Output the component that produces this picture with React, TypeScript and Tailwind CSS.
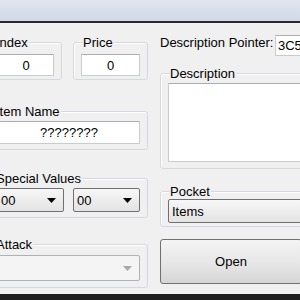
import React from "react";

type GroupProps = {
  label: string;
  className: string;
  children?: React.ReactNode;
};

function Group({ label, className, children }: GroupProps) {
  return (
    <div
      className={`relative border border-[#d5d9dd] rounded-[3px] shadow-[inset_1px_1px_0_#ffffff] ${className}`}
    >
      <span className="absolute left-[9px] top-[-8px] leading-[15px] bg-[#f0f0f0] pr-[1px] whitespace-nowrap">
        {label}
      </span>
      {children}
    </div>
  );
}

function TextBox({ value, className }: { value: string; className: string }) {
  return (
    <div
      className={`bg-white border border-[#c8cbcf] border-t-[#abadb3] flex items-center justify-center leading-[15px] ${className}`}
    >
      {value}
    </div>
  );
}

function Arrow({ color }: { color: string }) {
  return (
    <svg width="9" height="5" viewBox="0 0 9 5" className="shrink-0">
      <path d="M0 0 H9 L4.5 5 Z" fill={color} />
    </svg>
  );
}

function Combo({ value, className }: { value: string; className: string }) {
  return (
    <div
      className={`flex items-center justify-between border border-[#707070] rounded-[2px] bg-gradient-to-b from-[#f7f7f7] to-[#e3e3e3] pl-[3px] pr-[7px] leading-[15px] ${className}`}
    >
      <span>{value}</span>
      <Arrow color="#000000" />
    </div>
  );
}

export default function App() {
  return (
    <div
      className="w-[300px] h-[300px] overflow-hidden flex flex-col text-[13px] text-black"
      style={{ fontFamily: '"Liberation Sans", Arial, sans-serif' }}
    >
      <div className="h-[21px] shrink-0 bg-gradient-to-b from-[#dfe6ef] to-[#d0d9e5]" />
      <div className="h-[2px] shrink-0 bg-[#2a2a2a]" />

      <div className="h-[271px] shrink-0 bg-[#f0f0f0] flex overflow-hidden">
        {/* left column, partly cut at the window edge */}
        <div className="ml-[-14px] w-[162px] shrink-0 flex flex-col">
          <div className="mt-[19px] flex gap-[11px]">
            <Group label="Index" className="w-[76px] h-[38px] px-[7px] pt-[11px]">
              <TextBox value="0" className="h-[22px] pl-[4px]" />
            </Group>
            <Group label="Price" className="w-[75px] h-[38px] px-[7px] pt-[11px]">
              <TextBox value="0" className="h-[22px]" />
            </Group>
          </div>

          <Group label="Item Name" className="mt-[31px] h-[39px] px-[7px] pt-[9px]">
            <TextBox value="????????" className="h-[23px] pl-[4px]" />
          </Group>

          <Group label="Special Values" className="mt-[28px] h-[40px] px-[7px] pt-[9px]">
            <div className="flex gap-[9px]">
              <Combo value="00" className="flex-1 h-[24px] pl-[6px]" />
              <Combo value="00" className="flex-1 h-[24px]" />
            </div>
          </Group>

          <Group label="Attack" className="mt-[26px] h-[44px] px-[7px] pt-[10px]">
            <div className="h-[26px] flex items-center justify-end border border-[#adb2b5] rounded-[2px] bg-[#f4f4f4] pr-[7px]">
              <Arrow color="#a8a8a8" />
            </div>
          </Group>
        </div>

        {/* right column, runs past the right edge */}
        <div className="ml-[12px] w-[190px] shrink-0 flex flex-col">
          <div className="mt-[12px] flex items-start">
            <span className="w-[115px] shrink-0 leading-[15px] whitespace-nowrap">
              Description Pointer:
            </span>
            <div className="w-[60px] h-[21px] bg-white border border-[#c8cbcf] border-t-[#abadb3] pl-[2px] flex items-center leading-[15px]">
              3C5
            </div>
          </div>

          <Group label="Description" className="mt-[17px] h-[96px] px-[7px] pt-[9px]">
            <div className="h-[79px] bg-white border border-[#c8cbcf] border-t-[#abadb3]" />
          </Group>

          <Group label="Pocket" className="mt-[22px] h-[36px] px-[7px] pt-[7px]">
            <Combo value="Items" className="h-[24px]" />
          </Group>

          <button className="mt-[12px] w-[142px] h-[45px] shrink-0 border border-[#707070] rounded-[3px] bg-gradient-to-b from-[#f4f4f4] via-[#e8e8e8] to-[#d6d6d6] flex items-center justify-center leading-[15px]">
            Open
          </button>
        </div>
      </div>

      <div className="h-[6px] shrink-0 bg-[#1e1e1e]" />
    </div>
  );
}
